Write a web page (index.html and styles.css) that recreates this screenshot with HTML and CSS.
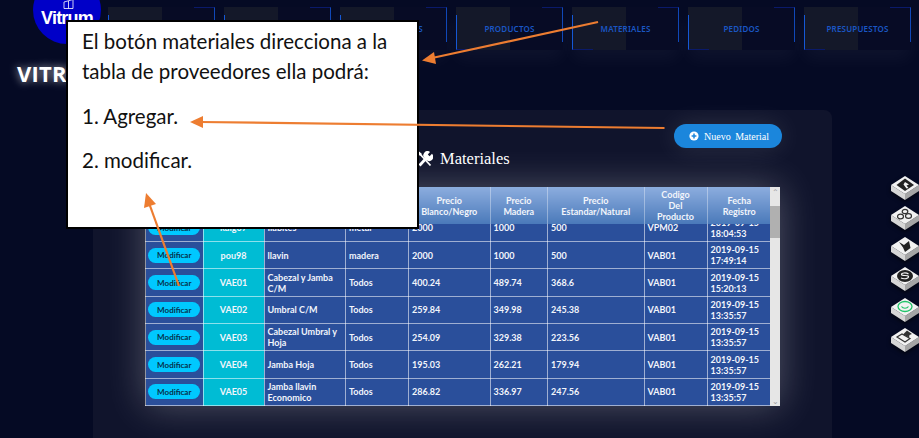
FILE: index.html
```html
<!DOCTYPE html>
<html lang="en">

<head>
    <meta charset="UTF-8">
    <meta name="viewport" content="width=device-width, initial-scale=1.0">
    <title>Vitrum Materiales</title>
    <link rel="stylesheet" href="styles.css">
</head>

<body>
    <header class="topbar">
        <div class="logo">
            <svg class="logo-icon" width="11" height="10" viewBox="0 0 11 10">
                <path d="M1 3 L10 0.5 V9.5 H1 Z M5.5 2 V9.5" fill="none" stroke="#fff" stroke-width="0.8"/>
            </svg>
            <span class="logo-text">Vitrum</span>
        </div>
        <nav class="menu">
            <a class="menu-item">USUARIOS</a>
            <a class="menu-item">CLIENTES</a>
            <a class="menu-item">PROVEEDORES</a>
            <a class="menu-item">PRODUCTOS</a>
            <a class="menu-item">MATERIALES</a>
            <a class="menu-item">PEDIDOS</a>
            <a class="menu-item">PRESUPUESTOS</a>
        </nav>
    </header>

    <h1 class="brand">VITRUM</h1>

    <main class="panel">
        <div class="panel-actions">
            <button class="new-btn">
                <svg width="10" height="10" viewBox="0 0 10 10">
                    <circle cx="5" cy="5" r="4.6" fill="#fff"/>
                    <path d="M5 2.6 V7.4 M2.6 5 H7.4" stroke="#1b86dc" stroke-width="1.5"/>
                </svg>
                Nuevo Material
            </button>
        </div>
        <h2 class="panel-title">
            <svg width="16" height="16" viewBox="0 0 16 16">
                <path d="M1.5 1.5 L13.5 14.5" fill="none" stroke="#fff" stroke-width="1.8"/>
                <path d="M0.5 2 L2 0.5 L5 3 L3 5 Z" fill="#fff"/>
                <path d="M2.5 14.5 L9 7.5" fill="none" stroke="#fff" stroke-width="2.8"/>
                <path d="M8 7.5 A4 4 0 0 1 13 1 L10.8 3.4 L12.6 5.2 L15 2.8 A4 4 0 0 1 9.2 9 Z" fill="#fff"/>
            </svg>
            Materiales
        </h2>

        <div class="table-box">
            <div class="table-main">
                <table class="grid grid-head">
                    <colgroup>
                        <col class="c1"><col class="c2"><col class="c3"><col class="c4"><col class="c5">
                        <col class="c6"><col class="c7"><col class="c8"><col class="c9">
                    </colgroup>
                    <tr>
                        <th></th>
                        <th>Codigo</th>
                        <th>Nombre</th>
                        <th>Tipo</th>
                        <th>Precio<br>Blanco/Negro</th>
                        <th>Precio<br>Madera</th>
                        <th>Precio<br>Estandar/Natural</th>
                        <th>Codigo<br>Del<br>Producto</th>
                        <th>Fecha<br>Registro</th>
                    </tr>
                </table>
                <div class="grid-scroll">
                    <table class="grid">
                        <colgroup>
                            <col class="c1"><col class="c2"><col class="c3"><col class="c4"><col class="c5">
                            <col class="c6"><col class="c7"><col class="c8"><col class="c9">
                        </colgroup>
                        <tr>
                            <td><button class="mod-btn">Modificar</button></td><td class="code">kaig07</td>
                            <td>Ilabites</td><td>metal</td><td>2000</td><td>1000</td><td>500</td><td>VPM02</td>
                            <td>2019-09-15<br>18:04:53</td>
                        </tr>
                        <tr>
                            <td><button class="mod-btn">Modificar</button></td><td class="code">pou98</td>
                            <td>llavin</td><td>madera</td><td>2000</td><td>1000</td><td>500</td><td>VAB01</td>
                            <td>2019-09-15<br>17:49:14</td>
                        </tr>
                        <tr>
                            <td><button class="mod-btn">Modificar</button></td><td class="code">VAE01</td>
                            <td>Cabezal y Jamba C/M</td><td>Todos</td><td>400.24</td><td>489.74</td><td>368.6</td><td>VAB01</td>
                            <td>2019-09-15<br>15:20:13</td>
                        </tr>
                        <tr>
                            <td><button class="mod-btn">Modificar</button></td><td class="code">VAE02</td>
                            <td>Umbral C/M</td><td>Todos</td><td>259.84</td><td>349.98</td><td>245.38</td><td>VAB01</td>
                            <td>2019-09-15<br>13:35:57</td>
                        </tr>
                        <tr>
                            <td><button class="mod-btn">Modificar</button></td><td class="code">VAE03</td>
                            <td>Cabezal Umbral y Hoja</td><td>Todos</td><td>254.09</td><td>329.38</td><td>223.56</td><td>VAB01</td>
                            <td>2019-09-15<br>13:35:57</td>
                        </tr>
                        <tr>
                            <td><button class="mod-btn">Modificar</button></td><td class="code">VAE04</td>
                            <td>Jamba Hoja</td><td>Todos</td><td>195.03</td><td>262.21</td><td>179.94</td><td>VAB01</td>
                            <td>2019-09-15<br>13:35:57</td>
                        </tr>
                        <tr>
                            <td><button class="mod-btn">Modificar</button></td><td class="code">VAE05</td>
                            <td>Jamba llavin Economico</td><td>Todos</td><td>286.82</td><td>336.97</td><td>247.56</td><td>VAB01</td>
                            <td>2019-09-15<br>13:35:57</td>
                        </tr>
                    </table>
                </div>
            </div>
            <div class="scrollbar">
                <span class="scroll-arrow">&#8963;</span>
                <span class="scroll-thumb"></span>
                <span class="scroll-rest"></span>
                <span class="scroll-arrow scroll-down">&#8964;</span>
            </div>
        </div>
    </main>

    <!-- floating social tiles -->
    <div class="tiles">
        <svg class="tile" viewBox="0 0 28 24"><path d="M0 9 V15 L14 24 V18 Z" fill="#d6d6d6"/><path d="M28 9 V15 L14 24 V18 Z" fill="#a5a5a5"/><path d="M14 0 L28 9 L14 18 L0 9 Z" fill="#f2f2f2"/><path d="M14 2.5 L23 9 L14 15 L5.5 9 Z" fill="#222"/><path d="M14 6 L18 8.5 L15.5 9.5 L17.5 12 L15.5 12.5 L12.5 8.5 Z" fill="#f2f2f2"/></svg>
        <svg class="tile" viewBox="0 0 28 24"><path d="M0 9 V15 L14 24 V18 Z" fill="#d6d6d6"/><path d="M28 9 V15 L14 24 V18 Z" fill="#a5a5a5"/><path d="M14 0 L28 9 L14 18 L0 9 Z" fill="#f2f2f2"/><g fill="none" stroke="#333" stroke-width="1.2"><ellipse cx="9.5" cy="10.5" rx="3" ry="2.4"/><ellipse cx="14" cy="5.5" rx="2.8" ry="2.2"/><ellipse cx="17.5" cy="10" rx="3" ry="2.4"/></g></svg>
        <svg class="tile" viewBox="0 0 28 24"><path d="M0 9 V15 L14 24 V18 Z" fill="#d6d6d6"/><path d="M28 9 V15 L14 24 V18 Z" fill="#a5a5a5"/><path d="M14 0 L28 9 L14 18 L0 9 Z" fill="#f2f2f2"/><path d="M8 5 L13 8 L18 4 L19.5 11 L14 15 L12 10.5 Z" fill="#222"/></svg>
        <svg class="tile" viewBox="0 0 28 24"><path d="M0 9 V15 L14 24 V18 Z" fill="#d6d6d6"/><path d="M28 9 V15 L14 24 V18 Z" fill="#a5a5a5"/><path d="M14 0 L28 9 L14 18 L0 9 Z" fill="#f2f2f2"/><ellipse cx="14" cy="9" rx="8" ry="6" fill="#222"/><path d="M10 11 C13 12.5 18 11.5 17.5 9.5 C17 7.5 11 9.5 10.5 7.5 C10 6 15 5.2 17.5 7" fill="none" stroke="#f2f2f2" stroke-width="1.2"/></svg>
        <svg class="tile" viewBox="0 0 28 24"><path d="M0 9 V15 L14 24 V18 Z" fill="#d6d6d6"/><path d="M28 9 V15 L14 24 V18 Z" fill="#a5a5a5"/><path d="M14 0 L28 9 L14 18 L0 9 Z" fill="#f2f2f2"/><ellipse cx="14" cy="8.5" rx="7" ry="5" fill="none" stroke="#22c46a" stroke-width="1.3"/><path d="M10.5 8.5 C12 10.8 16 10.8 17.5 8.5" fill="none" stroke="#22c46a" stroke-width="1.2"/></svg>
        <svg class="tile" viewBox="0 0 28 24"><path d="M0 9 V15 L14 24 V18 Z" fill="#d6d6d6"/><path d="M28 9 V15 L14 24 V18 Z" fill="#a5a5a5"/><path d="M14 0 L28 9 L14 18 L0 9 Z" fill="#f2f2f2"/><path d="M6 9 L11 6 L19 10.5 L14 14 Z" fill="none" stroke="#333" stroke-width="1.2"/><path d="M12 6.5 L16 2.5 L21 6 L18.5 7 L18 9.5 L15 8 Z" fill="#333"/></svg>
    </div>

    <!-- annotation over the screenshot -->
    <div class="note">
        <p>El botón materiales direcciona a la<br>tabla de proveedores ella podrá:</p>
        <p class="note-item">1. Agregar.</p>
        <p class="note-item">2. modificar.</p>
    </div>

    <svg class="arrows" width="919" height="438" viewBox="0 0 919 438">
        <g stroke="#ed7d31" stroke-width="2.2" fill="none">
            <path d="M598 22 L432 58"/>
            <path d="M664.5 128 L200 122"/>
            <path d="M179 286 L149 203"/>
        </g>
        <g fill="#ed7d31">
            <path d="M422 60.5 L434 52 L436 64 Z"/>
            <path d="M190 122 L203 116 L203 128 Z"/>
            <path d="M146 193 L156 204 L144 208 Z"/>
        </g>
    </svg>
</body>

</html>
```

FILE: styles.css
```css
* {
    box-sizing: border-box;
}

body {
    width: 919px;
    height: 438px;
    margin: 0;
    overflow: hidden;
    background-color: #050a24;
    font-family: 'Lato', sans-serif;
    color: #fff;
}

/* top bar */
.topbar {
    display: flex;
    height: 50px;
    padding-left: 33px;
}

.logo {
    display: flex;
    flex-direction: column;
    align-items: center;
    flex: none;
    width: 68px;
    height: 68px;
    margin-top: -24px;
    padding-top: 23px;
    border-radius: 50%;
    background-color: #0000c8;
}

.logo-icon {
    flex: none;
    margin-left: 2px;
}

.logo-text {
    font-family: 'Liberation Sans', sans-serif;
    font-size: 18px;
    line-height: 18px;
    font-weight: bold;
    letter-spacing: -0.8px;
}

.menu {
    display: flex;
    gap: 9px;
    margin-left: 7px;
    padding-top: 7px;
}

.menu-item {
    position: relative;
    display: flex;
    align-items: center;
    justify-content: center;
    width: 107px;
    height: 43px;
    background: linear-gradient(90deg, #141829 50%, #070b25 50%);
    box-shadow: 0 10px 18px rgba(255, 255, 255, 0.04);
    color: #1a56c4;
    font-family: 'Noto Sans', sans-serif;
    font-size: 8px;
    font-weight: 600;
    letter-spacing: 0.2px;
}

.menu-item::before {
    content: '';
    position: absolute;
    left: 0;
    top: 8px;
    bottom: 0;
    width: 20px;
    border-left: 1px solid #1558d6;
    border-bottom: 1px solid #0a1a6a;
}

.menu-item::after {
    content: '';
    position: absolute;
    right: 0;
    top: 0;
    bottom: 8px;
    width: 20px;
    border-right: 1px solid #1048b8;
    border-top: 1px solid #0a1a6a;
}

.brand {
    margin: 10px 0 0 17px;
    font-family: 'Open Sans', sans-serif;
    font-size: 22px;
    line-height: 26px;
    font-weight: bold;
    letter-spacing: 0.2px;
    text-shadow: 0 0 8px rgba(255, 255, 255, 0.7);
}

/* main panel */
.panel {
    width: 739px;
    height: 340px;
    margin: 24px 0 0 93px;
    padding: 14px 50px 0 52px;
    border-radius: 8px 8px 0 0;
    background-color: #10142c;
}

.panel-actions {
    display: flex;
    justify-content: flex-end;
    height: 24px;
}

.new-btn {
    display: flex;
    align-items: center;
    gap: 5px;
    width: 108px;
    height: 24px;
    padding: 0 0 0 15px;
    border: none;
    border-radius: 12px;
    background-color: #1b86dc;
    box-shadow: 0 0 26px rgba(255, 255, 255, 0.12);
    font-family: 'Liberation Serif', serif;
    font-size: 10px;
    word-spacing: 2px;
    color: #fff;
}

.panel-title {
    display: flex;
    align-items: center;
    gap: 7px;
    height: 24px;
    margin: -1px 0 0 272px;
    font-family: 'Liberation Serif', serif;
    font-size: 16.5px;
    font-weight: normal;
}

.table-box {
    display: flex;
    width: 635px;
    height: 219px;
    margin-top: 16px;
    box-shadow: 0 0 36px rgba(255, 255, 255, 0.28);
}

.table-main {
    width: 625px;
}

.grid {
    width: 625px;
    table-layout: fixed;
    border-collapse: collapse;
    font-size: 9px;
    font-weight: bold;
    line-height: 11px;
    color: #f2f5fb;
}

.c1 { width: 57.5px; }
.c2 { width: 61px; }
.c3 { width: 81.5px; }
.c4 { width: 63px; }
.c5 { width: 81.5px; }
.c6 { width: 57.5px; }
.c7 { width: 96.5px; }
.c8 { width: 63px; }
.c9 { width: 64px; }

.grid-head th {
    height: 37px;
    padding: 0;
    border-left: 1px solid rgba(255, 255, 255, 0.35);
    font-weight: bold;
    text-align: center;
}

.grid-head {
    background: linear-gradient(180deg, #8cadde, #4a79b9);
}

.grid-scroll {
    display: flex;
    flex-direction: column;
    justify-content: flex-end;
    height: 182px;
    overflow: hidden;
}

.grid-scroll .grid {
    flex: none;
}

.grid td {
    height: 27.33px;
    padding: 0 3px;
    border: 1px solid rgba(255, 255, 255, 0.55);
    background-color: #2a4f9b;
}

.grid td:first-child {
    padding: 0 2px;
    text-align: center;
}

.grid td.code {
    background-color: #00bcd4;
    text-align: center;
}

.mod-btn {
    display: block;
    width: 52px;
    height: 15px;
    margin: 0 auto;
    padding: 0;
    border: none;
    border-radius: 8px;
    background-color: #00c8ff;
    font-family: 'Lato', sans-serif;
    font-size: 8px;
    font-weight: bold;
    color: #06304a;
}

.scrollbar {
    display: flex;
    flex-direction: column;
    width: 10px;
    background-color: #e6e6e6;
}

.scroll-arrow {
    height: 19px;
    font-size: 8px;
    line-height: 10px;
    text-align: center;
    color: #a0a0a0;
}

.scroll-down {
    height: 10px;
}

.scroll-thumb {
    height: 32px;
    background-color: #b0b0b0;
}

.scroll-rest {
    flex: 1;
}

/* side tiles */
.tiles {
    position: absolute;
    left: 891px;
    top: 176px;
    display: flex;
    flex-direction: column;
    gap: 6.4px;
}

.tile {
    display: block;
    width: 28px;
    height: 24px;
    filter: drop-shadow(0 2px 2px rgba(0, 0, 0, 0.6));
}

/* annotation */
.note {
    position: absolute;
    left: 66px;
    top: 20px;
    width: 353px;
    height: 209px;
    padding: 4px 14px;
    border: 2px solid #000;
    background-color: #fff;
    font-family: 'Lato', sans-serif;
    font-size: 20.5px;
    line-height: 30px;
    color: #111;
}

.note p {
    margin: 0;
}

.note .note-item {
    margin-top: 14.5px;
}

.arrows {
    position: absolute;
    left: 0;
    top: 0;
}
```
